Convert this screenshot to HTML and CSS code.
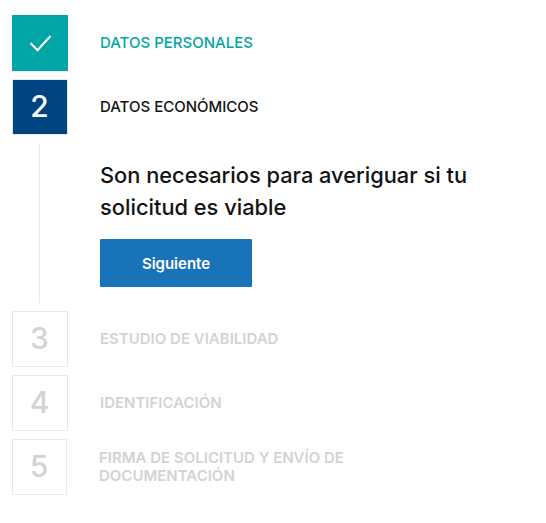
FILE: index.html
```html
<html>
	<head>
		<title>Solicitud</title>
		<meta name="viewport" content="width=device-width, height=device-height, initial-scale=1.0">
		<link rel="stylesheet" href="styles.css">
	</head>
	<body>
		<div class="steps">
			<div class="step step-done">
				<div class="box">
					<svg class="check" width="24" height="24" viewBox="0 0 24 24"><path d="M2.5 12 L9.5 19.2 L22.5 5" fill="none" stroke="#fff" stroke-width="2"/></svg>
				</div>
				<div class="label">DATOS PERSONALES</div>
			</div>
			<div class="step step-current">
				<div class="box">2</div>
				<div class="label">DATOS ECONÓMICOS</div>
			</div>
			<div class="detail">
				<div class="rail"><div class="rail-line"></div></div>
				<div class="detail-body">
					<h2 class="detail-title">Son necesarios para averiguar si tu solicitud es viable</h2>
					<div class="btn-next">Siguiente</div>
				</div>
			</div>
			<div class="step step-off">
				<div class="box">3</div>
				<div class="label">ESTUDIO DE VIABILIDAD</div>
			</div>
			<div class="step step-off">
				<div class="box">4</div>
				<div class="label">IDENTIFICACIÓN</div>
			</div>
			<div class="step step-off">
				<div class="box box-narrow">5</div>
				<div class="label label-wide">FIRMA DE SOLICITUD Y ENVÍO DE DOCUMENTACIÓN</div>
			</div>
		</div>
	</body>
</html>
```
FILE: styles.css
```css
body {
	margin: 0;
	background-color: #fff;
	font-family: "Inter", "Liberation Sans", sans-serif;
}
.steps {
	display: flex;
	flex-direction: column;
	gap: 8px;
	padding: 15px 12px 0;
}
.step {
	display: flex;
	align-items: center;
	gap: 32px;
}
.box {
	flex: 0 0 56px;
	box-sizing: border-box;
	height: 56px;
	padding: 0 1px 2px 0;
	display: flex;
	justify-content: center;
	align-items: center;
	font-size: 30px;
	font-weight: 500;
	border: 1px solid #e9e9e9;
}
.box-narrow {
	flex-basis: 55px;
}
.label {
	font-size: 15px;
	font-weight: 500;
	line-height: 18px;
	width: 270px;
}
.step-done .box {
	background: #02a5a5;
	border-color: #02a5a5;
	padding: 0;
}
.step-done .label {
	color: #02a5a5;
}
.step-current .box {
	background: #004481;
	color: #fff;
}
.step-current .label {
	color: #121212;
}
.step-off .box {
	color: #d3d3d3;
}
.step-off .label {
	color: #d3d3d3;
	font-weight: 600;
}
.detail {
	display: flex;
	gap: 32px;
	height: 160px;
}
.rail {
	flex: 0 0 55px;
	margin-right: 1px;
	display: flex;
	justify-content: center;
}
.rail-line {
	width: 1px;
	background: #e9e9e9;
}
.detail-body {
	padding-top: 16px;
}
.detail-title {
	margin: 0 0 16px;
	width: 380px;
	font-size: 21.8px;
	font-weight: 500;
	line-height: 32px;
	color: #121212;
}
.btn-next {
	width: 152px;
	height: 48px;
	display: flex;
	justify-content: center;
	align-items: center;
	background: #1973b8;
	border-radius: 1px;
	color: #fff;
	font-size: 15px;
	font-weight: 600;
}
```
